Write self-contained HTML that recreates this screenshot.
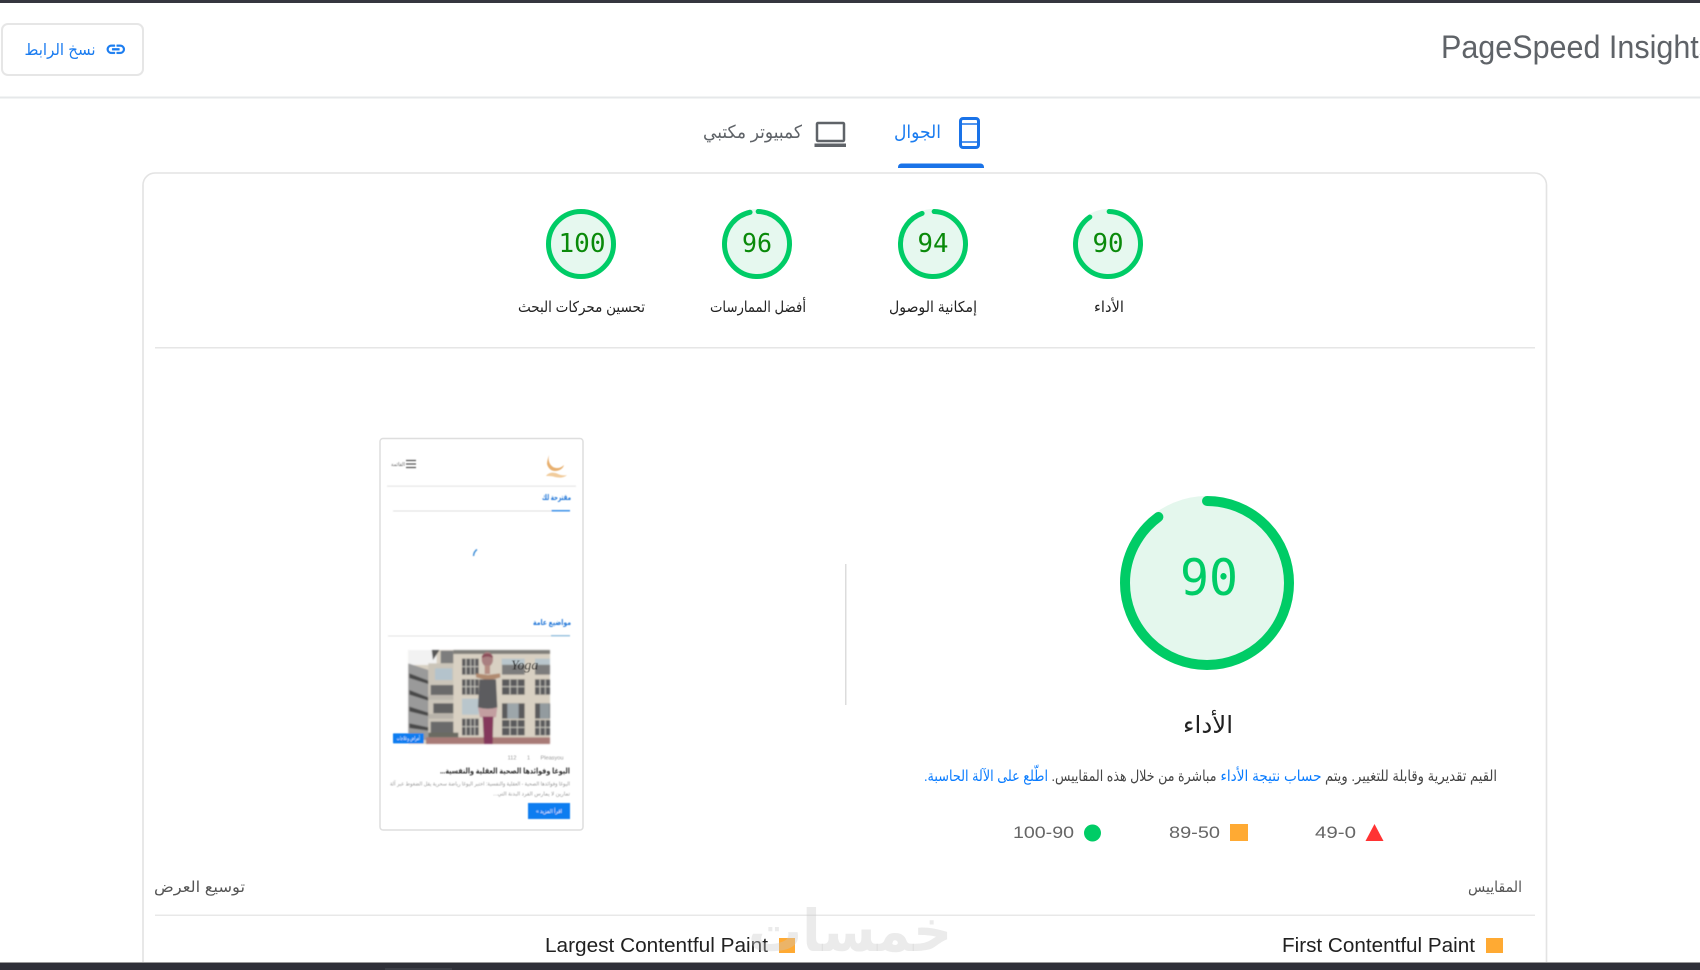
<!DOCTYPE html>
<html lang="ar">
<head>
<meta charset="utf-8">
<title>PageSpeed Insights</title>
<style>
html,body{margin:0;padding:0;width:1700px;height:970px;overflow:hidden;background:#fff}
svg{display:block}
text{font-family:"Liberation Sans","DejaVu Sans",sans-serif}
.ar{direction:rtl;text-anchor:middle}
.la{text-anchor:middle}
.mono{font-family:"DejaVu Sans Mono","Liberation Mono",monospace;text-anchor:middle}
</style>
</head>
<body>
<svg width="1700" height="970" viewBox="0 0 1700 970" xmlns="http://www.w3.org/2000/svg">
<defs>
<filter id="b" x="-5%" y="-5%" width="110%" height="110%"><feGaussianBlur stdDeviation="0.45"/></filter>
<filter id="p" x="-5%" y="-5%" width="110%" height="110%"><feGaussianBlur stdDeviation="1.800"/></filter>
</defs>
<rect width="1700" height="970" fill="#fff"/>
<rect width="1700" height="3" fill="#35363f"/>

<!-- header -->
<rect x="2" y="24" width="141" height="51" rx="6" fill="#fff" stroke="#e6e6e6" stroke-width="2"/>
<text class="ar" x="60" y="55" font-size="16" fill="#1a7cf0" textLength="71" lengthAdjust="spacingAndGlyphs">نسخ الرابط</text>
<path transform="translate(105,38.5) scale(.9)" fill="#1a7cf0" stroke="#1a7cf0" stroke-width=".5" d="M3.9 12c0-1.71 1.39-3.1 3.1-3.1h4V7H7c-2.76 0-5 2.24-5 5s2.24 5 5 5h4v-1.9H7c-1.71 0-3.1-1.39-3.1-3.1zM8 13h8v-2H8v2zm9-6h-4v1.9h4c1.71 0 3.1 1.39 3.1 3.1s-1.39 3.1-3.1 3.1h-4V17h4c2.76 0 5-2.24 5-5s-2.24-5-5-5z"/>
<text x="1441" y="58" font-size="32" fill="#5f6368" textLength="273" lengthAdjust="spacingAndGlyphs">PageSpeed Insights</text>
<rect x="0" y="96.500" width="1700" height="2" fill="#e6e8ea"/>

<!-- tabs -->
<rect x="960.5" y="118.5" width="18" height="29" rx="2.5" fill="none" stroke="#1a73e8" stroke-width="3"/>
<path d="M961 124h17M961 142h17" stroke="#1a73e8" stroke-width="1.6"/>
<text class="ar" x="917.5" y="138" font-size="18" fill="#1a7cf0" textLength="47" lengthAdjust="spacingAndGlyphs">الجوال</text>
<path d="M898 168v-1a3.500 3.500 0 0 1 3.500-3.500h79a3.500 3.500 0 0 1 3.500 3.500v1z" fill="#1a73e8"/>
<rect x="817" y="123" width="27" height="18" rx="1" fill="none" stroke="#5f6368" stroke-width="2.500"/>
<rect x="814.500" y="143.500" width="31.500" height="3.500" fill="#5f6368"/>
<text class="ar" x="752.500" y="138" font-size="18" fill="#5f6368" textLength="99" lengthAdjust="spacingAndGlyphs">كمبيوتر مكتبي</text>

<!-- card -->
<path d="M143 963V185a12 12 0 0 1 12-12H1534.500a12 12 0 0 1 12 12V963" fill="#fff" stroke="#e3e3e3" stroke-width="1.600"/>

<!-- small gauges -->
<g fill="#e6f8ef">
<circle cx="581" cy="244" r="35"/><circle cx="757" cy="244" r="35"/><circle cx="933" cy="244" r="35"/><circle cx="1108" cy="244" r="35"/>
</g>
<g fill="none" stroke="#00cc66" stroke-width="5" stroke-linecap="round">
<circle cx="581" cy="244" r="32.500"/>
<circle cx="757" cy="244" r="32.500" pathLength="100" stroke-dasharray="96 100" transform="rotate(-88 757 244)"/>
<circle cx="933" cy="244" r="32.500" pathLength="100" stroke-dasharray="94 100" transform="rotate(-88 933 244)"/>
<circle cx="1108" cy="244" r="32.500" pathLength="100" stroke-dasharray="90 100" transform="rotate(-88 1108 244)"/>
</g>
<g font-size="26" fill="#0a8a0a">
<text class="mono" x="582" y="252" textLength="47" lengthAdjust="spacingAndGlyphs">100</text>
<text class="mono" x="757" y="252" textLength="30" lengthAdjust="spacingAndGlyphs">96</text>
<text class="mono" x="933" y="252" textLength="31" lengthAdjust="spacingAndGlyphs">94</text>
<text class="mono" x="1108" y="252" textLength="31" lengthAdjust="spacingAndGlyphs">90</text>
</g>
<g font-size="15" fill="#222">
<text class="ar" x="581.500" y="312" textLength="127" lengthAdjust="spacingAndGlyphs">تحسين محركات البحث</text>
<text class="ar" x="758" y="312" textLength="96" lengthAdjust="spacingAndGlyphs">أفضل الممارسات</text>
<text class="ar" x="933" y="312" textLength="88" lengthAdjust="spacingAndGlyphs">إمكانية الوصول</text>
<text class="ar" x="1109" y="312" textLength="30" lengthAdjust="spacingAndGlyphs">الأداء</text>
</g>
<rect x="155" y="347" width="1380" height="1.500" fill="#e6e6e6"/>

<!-- big gauge -->
<circle cx="1207" cy="583" r="87" fill="#e4f7ed"/>
<circle cx="1207" cy="583" r="82" fill="none" stroke="#00cc66" stroke-width="10" stroke-linecap="round" pathLength="100" stroke-dasharray="90 100" transform="rotate(-90 1207 583)"/>
<text class="mono" x="1209" y="595" font-size="50" fill="#00cc66" textLength="58" lengthAdjust="spacingAndGlyphs">90</text>
<text class="ar" x="1208" y="733" font-size="24" fill="#212121" textLength="50" lengthAdjust="spacingAndGlyphs">الأداء</text>

<!-- description -->
<g font-size="15">
<text class="ar" x="1411" y="781" fill="#444" textLength="172" lengthAdjust="spacingAndGlyphs">القيم تقديرية وقابلة للتغيير. ويتم</text>
<text class="ar" x="1271" y="781" fill="#0a7cff" textLength="101" lengthAdjust="spacingAndGlyphs">حساب نتيجة الأداء</text>
<text class="ar" x="1134" y="781" fill="#444" textLength="165" lengthAdjust="spacingAndGlyphs">مباشرة من خلال هذه المقاييس.</text>
<text class="ar" x="986" y="781" fill="#0a7cff" textLength="124" lengthAdjust="spacingAndGlyphs">اطّلع على الآلة الحاسبة.</text>
</g>

<!-- legend -->
<g font-size="17" fill="#666">
<text class="la" x="1043.500" y="838" textLength="61" lengthAdjust="spacingAndGlyphs">100-90</text>
<text class="la" x="1194.500" y="838" textLength="51" lengthAdjust="spacingAndGlyphs">89-50</text>
<text class="la" x="1335.500" y="838" textLength="41" lengthAdjust="spacingAndGlyphs">49-0</text>
</g>
<circle cx="1092.500" cy="833" r="8.500" fill="#00cc66"/>
<rect x="1230" y="824" width="18" height="17" fill="#ffaa33"/>
<path d="M1374.500 824L1383.500 841H1365.500z" fill="#ff3333"/>

<rect x="845" y="564" width="1.500" height="141" fill="#dcdcdc"/>

<!-- phone preview -->
<rect x="380" y="438.500" width="203" height="391.500" rx="3" fill="#fff" stroke="#dedede" stroke-width="1.500"/>
<g filter="url(#b)">
  <!-- hamburger + label -->
  <path d="M406 460.500h10M406 464h10M406 467.500h10" stroke="#555" stroke-width="1.200"/>
  <text class="ar" x="398" y="466" font-size="5" fill="#666">القائمة</text>
  <!-- logo -->
  <path d="M549 455c-1 5 0 9 4 12 4 2 8 1 11-2-1 4-5 6-9 6-4 0-7-3-8-7 0-3 1-6 2-9z" fill="#e8b070"/>
  <path d="M546 476c3-4 8-4 12-2 2 1 6 2 9 1-3 3-8 3-12 2-3-1-6-1-9-1z" fill="#f1cc9c"/>
  <rect x="387" y="485.500" width="189" height="1.300" fill="#e8e8e8"/>
  <text class="ar" x="556.500" y="500" font-size="8" font-weight="bold" fill="#2277d8" textLength="29" lengthAdjust="spacingAndGlyphs">مقترحة لك</text>
  <rect x="393" y="510.500" width="177" height="1" fill="#e0e0e0"/>
  <rect x="551.500" y="510" width="18.500" height="1.500" fill="#3b8fe8"/>
  <path d="M473.500 556c.2-3 1.300-5 3.500-6.500" fill="none" stroke="#3f8fd8" stroke-width="1.400"/>
  <text class="ar" x="552" y="625" font-size="8" font-weight="bold" fill="#2277d8" textLength="38" lengthAdjust="spacingAndGlyphs">مواضيع عامة</text>
  <rect x="388" y="635.500" width="182" height="1" fill="#e4e4e4"/>
  <rect x="551" y="635" width="19" height="1.500" fill="#9cc4e0"/>

  <!-- photo (local coords: zoom crop at 3x) -->
  <g transform="translate(400,640) scale(.33333)">
    <g filter="url(#p)">
    <rect x="25" y="30" width="425" height="282" fill="#d8d0c2"/>
    <rect x="25" y="30" width="85" height="45" fill="#f2f2f2"/>
    <path d="M95 30h24l-20 30z" fill="#555"/>
    <rect x="122" y="32" width="38" height="38" fill="#7d7d7d"/>
    <!-- left grey building -->
    <path d="M25 70l60 20V300H25z" fill="#9a9a9a"/>
    <path d="M28 100l57 22v10l-57-18zM28 150l57 22v10l-57-18zM28 200l57 18v10l-57-14zM28 250l57 12v10l-57-8z" fill="#4a4a4a"/>
    <!-- mid balconies -->
    <rect x="85" y="70" width="75" height="230" fill="#cbc5b9"/>
    <rect x="105" y="85" width="52" height="35" fill="#b4c3cc"/>
    <rect x="92" y="135" width="68" height="30" fill="#6a6a6a"/>
    <rect x="85" y="165" width="75" height="14" fill="#bdb8ae"/>
    <rect x="100" y="190" width="60" height="30" fill="#626262"/>
    <rect x="85" y="222" width="75" height="14" fill="#b8b3aa"/>
    <rect x="92" y="245" width="68" height="42" fill="#6a6a6a"/>
    <!-- top of cream building -->
    <rect x="160" y="30" width="290" height="12" fill="#807f79"/>
    <!-- windows -->
    <g fill="#5a5a5c">
      <rect x="186" y="56" width="50" height="48"/><rect x="306" y="74" width="68" height="30" fill="#7c7c7c"/><rect x="405" y="74" width="45" height="30" fill="#7c7c7c"/>
      <rect x="186" y="118" width="50" height="46"/><rect x="306" y="118" width="68" height="46"/><rect x="405" y="118" width="45" height="46"/>
      <rect x="306" y="190" width="68" height="46"/><rect x="405" y="190" width="45" height="46"/>
      <rect x="186" y="236" width="50" height="50"/><rect x="306" y="240" width="68" height="46"/><rect x="405" y="240" width="45" height="46"/>
    </g>
    <g fill="#b9c6cc">
      <rect x="186" y="176" width="50" height="48"/><rect x="322" y="190" width="34" height="46" opacity=".7"/><rect x="420" y="190" width="28" height="46" opacity=".6"/>
      <rect x="305" y="56" width="69" height="18"/><rect x="405" y="56" width="45" height="18"/>
    </g>
    <path d="M198 56v48M212 56v48M224 56v48M198 118v46M212 118v46M224 118v46M198 236v50M212 236v50M224 236v50M330 118v46M352 118v46M330 240v46M352 240v46M420 118v46M436 118v46M420 240v46M436 240v46" stroke="#c8c6be" stroke-width="3"/>
    <path d="M186 80h50M186 140h50M186 260h50M306 140h68M306 262h68M405 140h45M405 262h45" stroke="#c8c6be" stroke-width="3"/>
    <!-- ground -->
    <rect x="78" y="292" width="372" height="20" fill="#a87a76"/>
    <rect x="85" y="278" width="90" height="14" fill="#6a6a62"/>
    <!-- woman -->
    <ellipse cx="262" cy="58" rx="17" ry="22" fill="#a97f80"/>
    <path d="M245 50c3-12 30-12 34 0l-2 4c-8-6-22-6-30 0z" fill="#8a4b58"/>
    <rect x="254" y="76" width="16" height="26" fill="#b58c82"/>
    <path d="M228 100l36 5 36-5 1 12-34 10-39-10z" fill="#b08a70"/>
    <path d="M238 118h50l4 84c-15 6-38 6-58 0z" fill="#5c5c5e"/>
    <path d="M234 202c18 6 38 6 58 0l-4 30h-48z" fill="#c29ea0"/>
    <path d="M248 230h32l-2 82h-26z" fill="#84395c"/>
    </g>
    <text x="333" y="88" font-size="42" style="font-family:'Liberation Serif',serif;font-style:italic" fill="#151515" textLength="82" lengthAdjust="spacingAndGlyphs">Yoga</text>
    <rect x="-21" y="280" width="92" height="30" rx="2" fill="#0d7df0"/>
    <text class="ar" x="25" y="300" font-size="16" fill="#dff0ff" textLength="70" lengthAdjust="spacingAndGlyphs">أمراض وعلاجات</text>
  </g>

  <!-- meta -->
  <text class="la" x="552" y="759.500" font-size="5.500" fill="#999" textLength="23" lengthAdjust="spacingAndGlyphs">Pleasyou</text>
  <text class="la" x="528.500" y="759.500" font-size="5.500" fill="#999">1</text>
  <text class="la" x="512" y="759.500" font-size="5.500" fill="#999">112</text>
  <text class="ar" x="505" y="773.500" font-size="8" font-weight="bold" fill="#333" textLength="130" lengthAdjust="spacingAndGlyphs">اليوغا وفوائدها الصحية العقلية والنفسية...</text>
  <text class="ar" x="480" y="785.500" font-size="5.500" fill="#999" textLength="180" lengthAdjust="spacingAndGlyphs">اليوغا وفوائدها الصحية - العقلية والنفسية: اختبر اليوغا رياضة سحرية يقل الضغوط عبر آلة</text>
  <text class="ar" x="531.500" y="795.500" font-size="5.500" fill="#999" textLength="77" lengthAdjust="spacingAndGlyphs">تمارين لا يمارس الفرد البدنة التي...</text>
  <rect x="528" y="803" width="42" height="16" fill="#0d7df0"/>
  <text class="ar" x="549" y="813" font-size="5.500" fill="#e6f2ff" textLength="26" lengthAdjust="spacingAndGlyphs">اقرأ المزيد »</text>
</g>

<!-- metrics header -->
<text class="ar" x="1495" y="892" font-size="15" fill="#555" textLength="54" lengthAdjust="spacingAndGlyphs">المقاييس</text>
<text class="ar" x="199.500" y="892" font-size="15" fill="#555" textLength="91" lengthAdjust="spacingAndGlyphs">توسيع العرض</text>
<rect x="155" y="914.500" width="1380" height="1.500" fill="#e8e8e8"/>

<rect x="779" y="938" width="16" height="15" fill="#ffaa33"/>
<text x="545" y="952" font-size="20" fill="#212121" textLength="223" lengthAdjust="spacingAndGlyphs">Largest Contentful Paint</text>
<rect x="1486" y="938" width="17" height="15" fill="#ffaa33"/>
<text x="1282" y="952" font-size="20" fill="#212121" textLength="193" lengthAdjust="spacingAndGlyphs">First Contentful Paint</text>

<!-- watermark -->
<text class="ar" x="850" y="951" font-size="58" font-weight="bold" fill="#c8c8c8" fill-opacity=".36" style="font-family:'DejaVu Sans',sans-serif" textLength="204" lengthAdjust="spacingAndGlyphs">خمسات</text>

<!-- bottom bar -->
<rect x="0" y="962" width="1700" height="1" fill="#9a9a9a"/>
<rect x="0" y="963" width="1700" height="7" fill="#2f3038"/>
<rect x="385" y="968" width="67" height="2" fill="#3d3f47"/>
</svg>
</body>
</html>
